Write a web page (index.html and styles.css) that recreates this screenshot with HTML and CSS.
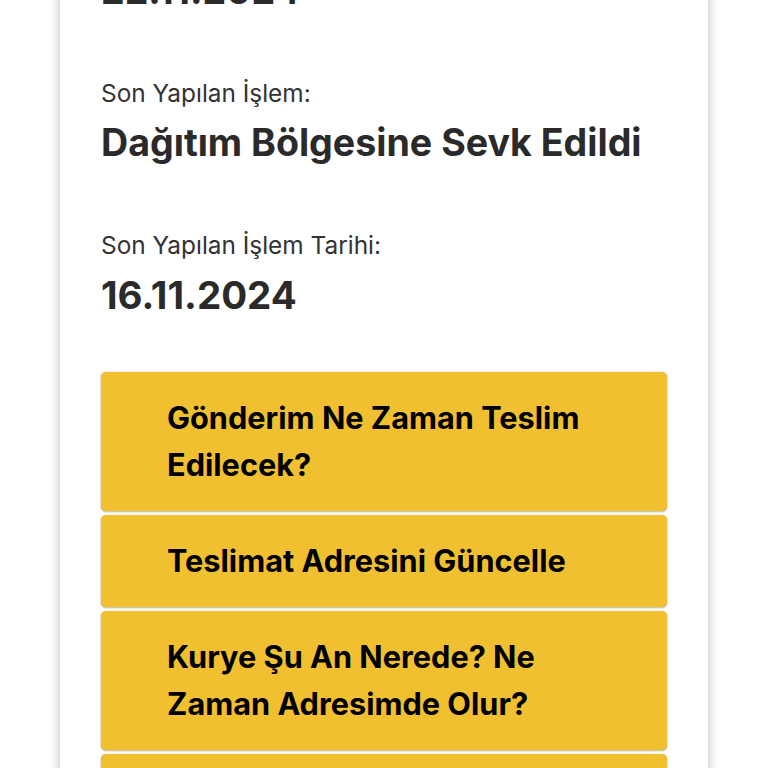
FILE: index.html
```html
<!DOCTYPE html>
<html lang="tr">
<head>
<meta charset="utf-8">
<link rel="stylesheet" href="styles.css">
</head>
<body>
<main class="card">
  <section class="info">
    <div class="label">Tahmini Teslim Tarihi:</div>
    <div class="value">22.11.2024</div>
  </section>
  <section class="info">
    <div class="label">Son Yapılan İşlem:</div>
    <div class="value">Dağıtım Bölgesine Sevk Edildi</div>
  </section>
  <section class="info last">
    <div class="label">Son Yapılan İşlem Tarihi:</div>
    <div class="value">16.11.2024</div>
  </section>
  <nav class="actions">
    <a class="action">Gönderim Ne Zaman Teslim Edilecek?</a>
    <a class="action">Teslimat Adresini Güncelle</a>
    <a class="action">Kurye Şu An Nerede? Ne Zaman Adresimde Olur?</a>
    <a class="action">Teslimat Noktası Değiştir</a>
  </nav>
</main>
</body>
</html>
```

FILE: styles.css
```css
html, body {
  margin: 0;
  padding: 0;
  background: #ffffff;
  overflow: hidden;
}
body {
  font-family: Inter, "Noto Sans", "Liberation Sans", sans-serif;
  height: 768px;
}
.card {
  width: 648px;
  margin: -74px auto 0;
  padding: 0 41px 40px;
  box-sizing: border-box;
  background: #ffffff;
  box-shadow: 0 0 10px rgba(0, 0, 0, 0.28);
}
.info {
  display: flex;
  flex-direction: column;
  gap: 11px;
  margin-bottom: 63px;
}
.info.last {
  margin-bottom: 53px;
}
.label {
  font-size: 24.4px;
  line-height: 30px;
  color: #333333;
  font-weight: 400;
}
.value {
  font-size: 37.6px;
  line-height: 48px;
  font-weight: 700;
  color: #2a2a2a;
}
.info.last .value {
  font-size: 38.5px;
}
.actions {
  display: flex;
  flex-direction: column;
  gap: 4px;
}
.action {
  display: block;
  background: #f0c030;
  border-radius: 5px;
  padding: 22px 60px 23px 66px;
  font-size: 30.7px;
  line-height: 47px;
  font-weight: 700;
  color: #000000;
  box-shadow: 0 1px 2px rgba(120, 90, 0, 0.45), 0 0 1px rgba(0, 0, 0, 0.25);
}
```
